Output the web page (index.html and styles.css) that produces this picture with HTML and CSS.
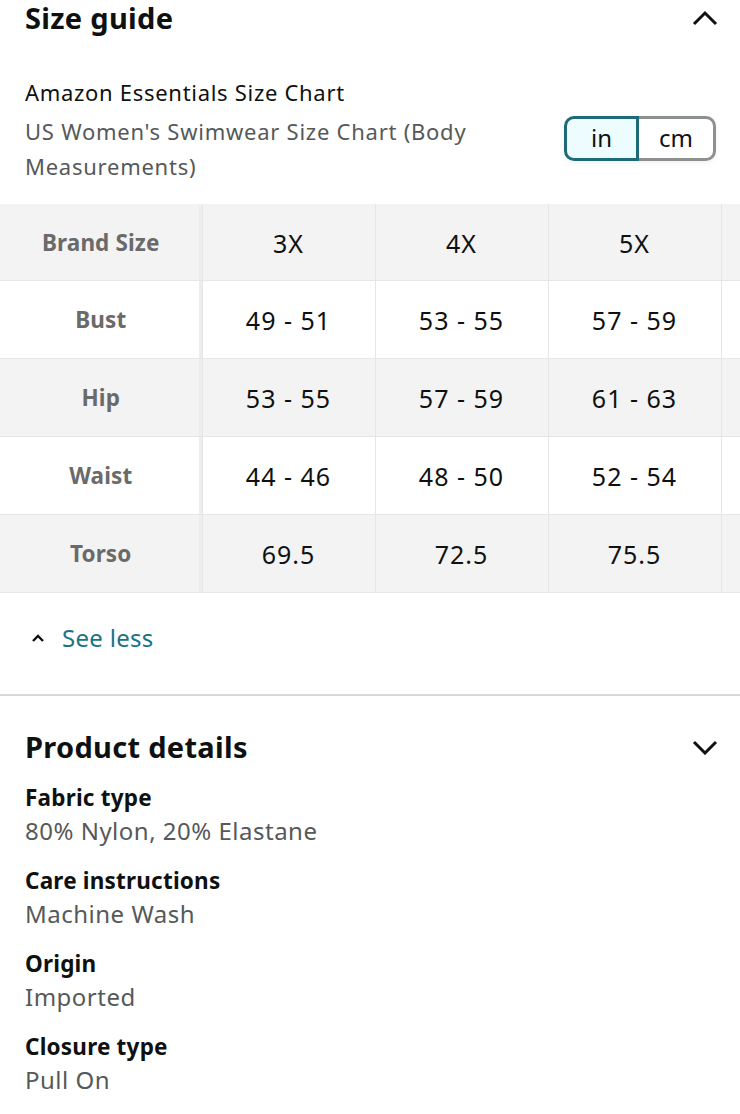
FILE: index.html
```html
<!DOCTYPE html>
<html>
<head>
<meta charset="utf-8">
<link rel="stylesheet" href="styles.css">
</head>
<body>
<section class="size-guide">
  <div class="section-head">
    <h2 class="section-title">Size guide</h2>
    <svg class="chev" width="26" height="16" viewBox="0 0 26 16"><path d="M2 14 L13 3 L24 14" fill="none" stroke="#111" stroke-width="3"/></svg>
  </div>
  <div class="chart-info">
    <div class="chart-text">
      <div class="chart-brand">Amazon Essentials Size Chart</div>
      <div class="chart-sub">US Women's Swimwear Size Chart (Body Measurements)</div>
    </div>
    <div class="unit-toggle">
      <span class="unit unit-active">in</span>
      <span class="unit">cm</span>
    </div>
  </div>
  <div class="table-wrap">
    <table class="size-table">
      <tr class="row-gray head-row">
        <th class="first">Brand Size</th><td>3X</td><td>4X</td><td>5X</td><td class="peek"></td>
      </tr>
      <tr class="row-white">
        <th class="first">Bust</th><td>49 - 51</td><td>53 - 55</td><td>57 - 59</td><td class="peek"></td>
      </tr>
      <tr class="row-gray">
        <th class="first">Hip</th><td>53 - 55</td><td>57 - 59</td><td>61 - 63</td><td class="peek"></td>
      </tr>
      <tr class="row-white">
        <th class="first">Waist</th><td>44 - 46</td><td>48 - 50</td><td>52 - 54</td><td class="peek"></td>
      </tr>
      <tr class="row-gray">
        <th class="first">Torso</th><td>69.5</td><td>72.5</td><td>75.5</td><td class="peek"></td>
      </tr>
    </table>
  </div>
  <div class="see-less">
    <svg class="small-chev" width="14" height="10" viewBox="0 0 14 10"><path d="M2 8 L7 3 L12 8" fill="none" stroke="#111" stroke-width="2.4"/></svg>
    <span>See less</span>
  </div>
</section>
<section class="details">
  <div class="section-head details-head">
    <h2 class="section-title">Product details</h2>
    <svg class="chev" width="26" height="16" viewBox="0 0 26 16"><path d="M2 3 L13 14 L24 3" fill="none" stroke="#111" stroke-width="3"/></svg>
  </div>
  <dl class="detail-list">
    <div class="detail"><dt>Fabric type</dt><dd>80% Nylon, 20% Elastane</dd></div>
    <div class="detail"><dt>Care instructions</dt><dd>Machine Wash</dd></div>
    <div class="detail"><dt>Origin</dt><dd>Imported</dd></div>
    <div class="detail"><dt>Closure type</dt><dd>Pull On</dd></div>
  </dl>
</section>
</body>
</html>
```
FILE: styles.css
```css
* { box-sizing: border-box; }
html, body { margin: 0; padding: 0; background: #fff; }
body {
  font-family: "Noto Sans", "Open Sans", sans-serif;
  color: #0f1111;
  width: 740px;
  overflow: hidden;
}
.section-head {
  display: flex;
  justify-content: space-between;
  align-items: center;
  padding: 0 22px 0 25px;
  height: 38px;
  margin-top: -1px;
}
.section-title {
  margin: 0;
  font-size: 29px;
  font-weight: 700;
  letter-spacing: 0.3px;
  line-height: 38px;
}
.chart-info {
  display: flex;
  justify-content: space-between;
  align-items: flex-start;
  padding: 39px 24px 0 25px;
}
.chart-text { width: 470px; }
.chart-brand { font-size: 22px; line-height: 32px; letter-spacing: 0.7px; }
.chart-sub { font-size: 22px; line-height: 35px; color: #565959; letter-spacing: 0.75px; margin-top: 6px; }
.unit-toggle {
  display: flex;
  margin-top: 40px;
  height: 45px;
  box-shadow: 0 2px 6px rgba(0,0,0,0.06);
  border-radius: 10px;
}
.unit {
  width: 77px;
  display: flex;
  align-items: center;
  justify-content: center;
  font-size: 24px;
  border: 3px solid #8d9090;
  border-left: none;
  border-radius: 0 10px 10px 0;
  background: #fff;
  padding-bottom: 2px;
}
.unit-active {
  width: 75px;
  background: #edfdff;
  border: 3px solid #1d6a78;
  border-radius: 10px 0 0 10px;
}
.table-wrap {
  margin-top: 20px;
  overflow: hidden;
  width: 740px;
}
.size-table {
  border-collapse: collapse;
  table-layout: fixed;
  width: 894px;
}
.size-table th, .size-table td {
  height: 78px;
  text-align: center;
  font-size: 25px;
  letter-spacing: 1px;
  border: 1px solid #e6e6e6;
  padding: 0;
}
.size-table td { width: 173px; color: #0f1111; }
.size-table th.first {
  width: 202px;
  font-weight: 700;
  color: #6a6a6a;
  font-size: 22.5px;
  letter-spacing: 0.1px;
  border-left: none;
  box-shadow: inset -6px 0 0 -3px #ededed;
}
.head-row th, .head-row td { height: 76px; border-top: 1px solid #f3f3f3; }
.row-gray { background: #f3f3f3; }
.row-white { background: #fff; }
.see-less {
  display: flex;
  align-items: center;
  height: 103px;
  padding-left: 31px;
  padding-bottom: 12px;
  gap: 17px;
  border-bottom: 2px solid #d5d9d9;
}
.see-less span { font-size: 24px; letter-spacing: 0.3px; color: #1a7483; }
.details-head { margin-top: 31px; height: 40px; }
.detail-list { margin: 14px 0 0; padding: 0 25px; }
.detail { margin-bottom: 16px; }
.detail dt { font-size: 22.5px; font-weight: 700; line-height: 33px; letter-spacing: 0.2px; }
.detail dd { margin: 0; font-size: 24px; color: #565959; line-height: 34px; letter-spacing: 0.5px; }
```
